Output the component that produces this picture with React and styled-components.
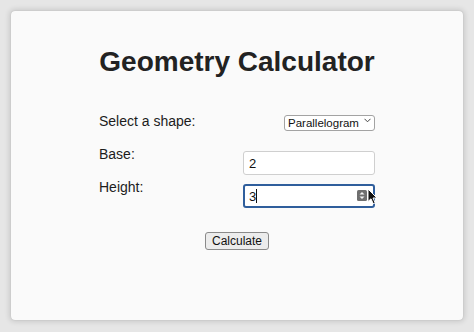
import React from "react";
import styled, { createGlobalStyle } from "styled-components";

const Global = createGlobalStyle`
  html, body { margin: 0; padding: 0; }
  body {
    width: 474px;
    height: 332px;
    background: #e6e6e6;
    font-family: "Liberation Sans", Arial, sans-serif;
    overflow: hidden;
  }
`;

const Page = styled.div`
  box-sizing: border-box;
  width: 474px;
  height: 332px;
  padding: 11px 11px 12px 11px;
  display: flex;
`;

const Card = styled.div`
  flex: 1;
  background: #fafafa;
  border-radius: 4px;
  box-shadow: 0 0 5px 2px rgba(0, 0, 0, 0.12), 0 0 1px rgba(0, 0, 0, 0.2);
  padding-top: 35px;
  display: flex;
  flex-direction: column;
  align-items: center;
`;

const Inner = styled.div`
  width: 276px;
  display: flex;
  flex-direction: column;
`;

const Title = styled.h1`
  margin: 0;
  font-size: 28px;
  line-height: 32px;
  font-weight: bold;
  color: #222;
  text-align: center;
  white-space: nowrap;
`;

const Field = styled.div`
  display: flex;
  justify-content: space-between;
  align-items: flex-start;
  margin-top: ${(p) => p.$top}px;
`;

const Label = styled.label`
  font-size: 14px;
  line-height: 16px;
  color: #1c1c1c;
`;

const SelectWrap = styled.div`
  position: relative;
  width: 91px;
  height: 16px;
`;

const Select = styled.select`
  appearance: none;
  -webkit-appearance: none;
  box-sizing: border-box;
  width: 100%;
  height: 100%;
  margin: 0;
  border: 1px solid #a3a3a3;
  border-radius: 3px;
  background: #fff;
  font-family: "Liberation Sans", Arial, sans-serif;
  font-size: 11.5px;
  color: #111;
  padding: 0 0 0 3px;
  line-height: 14px;
`;

const Chevron = styled.svg`
  position: absolute;
  right: 4px;
  top: 5px;
  width: 7px;
  height: 5px;
  pointer-events: none;
`;

const InputWrap = styled.div`
  position: relative;
  margin-top: ${(p) => p.$top}px;
`;

const Input = styled.input`
  box-sizing: border-box;
  width: 132px;
  height: 24px;
  margin: 0;
  border: ${(p) => (p.$focused ? "2px solid #2f5e9c" : "1px solid #cfcfcf")};
  border-radius: 3px;
  background: #fff;
  font-family: "Liberation Sans", Arial, sans-serif;
  font-size: 13px;
  color: #111;
  padding: 0 0 0 ${(p) => (p.$focused ? 4 : 5)}px;
  outline: none;
  caret-color: #111;
`;

const Caret = styled.span`
  position: absolute;
  left: 13px;
  top: 5px;
  width: 1px;
  height: 14px;
  background: #111;
`;

const Spinner = styled.svg`
  position: absolute;
  right: 8px;
  top: 6px;
  width: 10px;
  height: 11px;
`;

const Pointer = styled.svg`
  position: absolute;
  right: -3px;
  top: 4px;
  width: 11px;
  height: 17px;
`;

const ButtonRow = styled.div`
  display: flex;
  justify-content: center;
  margin-top: 24px;
`;

const Button = styled.button`
  box-sizing: border-box;
  height: 18px;
  padding: 0 6px;
  margin: 0;
  border: 1px solid #8a8a8a;
  border-radius: 3px;
  background: #ececec;
  font-family: "Liberation Sans", Arial, sans-serif;
  font-size: 12px;
  line-height: 14px;
  color: #111;
`;

export default function App() {
  return (
    <>
      <Global />
      <Page>
        <Card>
          <Inner>
            <Title>Geometry Calculator</Title>
            <Field $top={35}>
              <Label>Select a shape:</Label>
              <SelectWrap>
                <Select defaultValue="parallelogram">
                  <option value="parallelogram">Parallelogram</option>
                </Select>
                <Chevron viewBox="0 0 7 5">
                  <path d="M0.5 0.8 L3.5 3.8 L6.5 0.8" fill="none" stroke="#444" strokeWidth="1" />
                </Chevron>
              </SelectWrap>
            </Field>
            <Field $top={17}>
              <Label>Base:</Label>
              <InputWrap $top={5}>
                <Input defaultValue="2" readOnly />
              </InputWrap>
            </Field>
            <Field $top={4}>
              <Label>Height:</Label>
              <InputWrap $top={5}>
                <Input $focused defaultValue="3" readOnly />
                <Caret />
                <Spinner viewBox="0 0 10 11">
                  <rect x="0" y="0" width="10" height="11" rx="1.5" fill="#6f6f6f" />
                  <path d="M2.5 4.5 L5 2 L7.5 4.5 Z" fill="#f2f2f2" />
                  <path d="M2.5 6.5 L5 9 L7.5 6.5 Z" fill="#f2f2f2" />
                </Spinner>
                <Pointer viewBox="0 0 11 17">
                  <path
                    d="M1 1 L1 13.5 L4 10.8 L6.2 15.8 L8.2 14.9 L6 10 L10 10 Z"
                    fill="#111"
                    stroke="#fff"
                    strokeWidth="1"
                    strokeLinejoin="round"
                  />
                </Pointer>
              </InputWrap>
            </Field>
            <ButtonRow>
              <Button>Calculate</Button>
            </ButtonRow>
          </Inner>
        </Card>
      </Page>
    </>
  );
}
